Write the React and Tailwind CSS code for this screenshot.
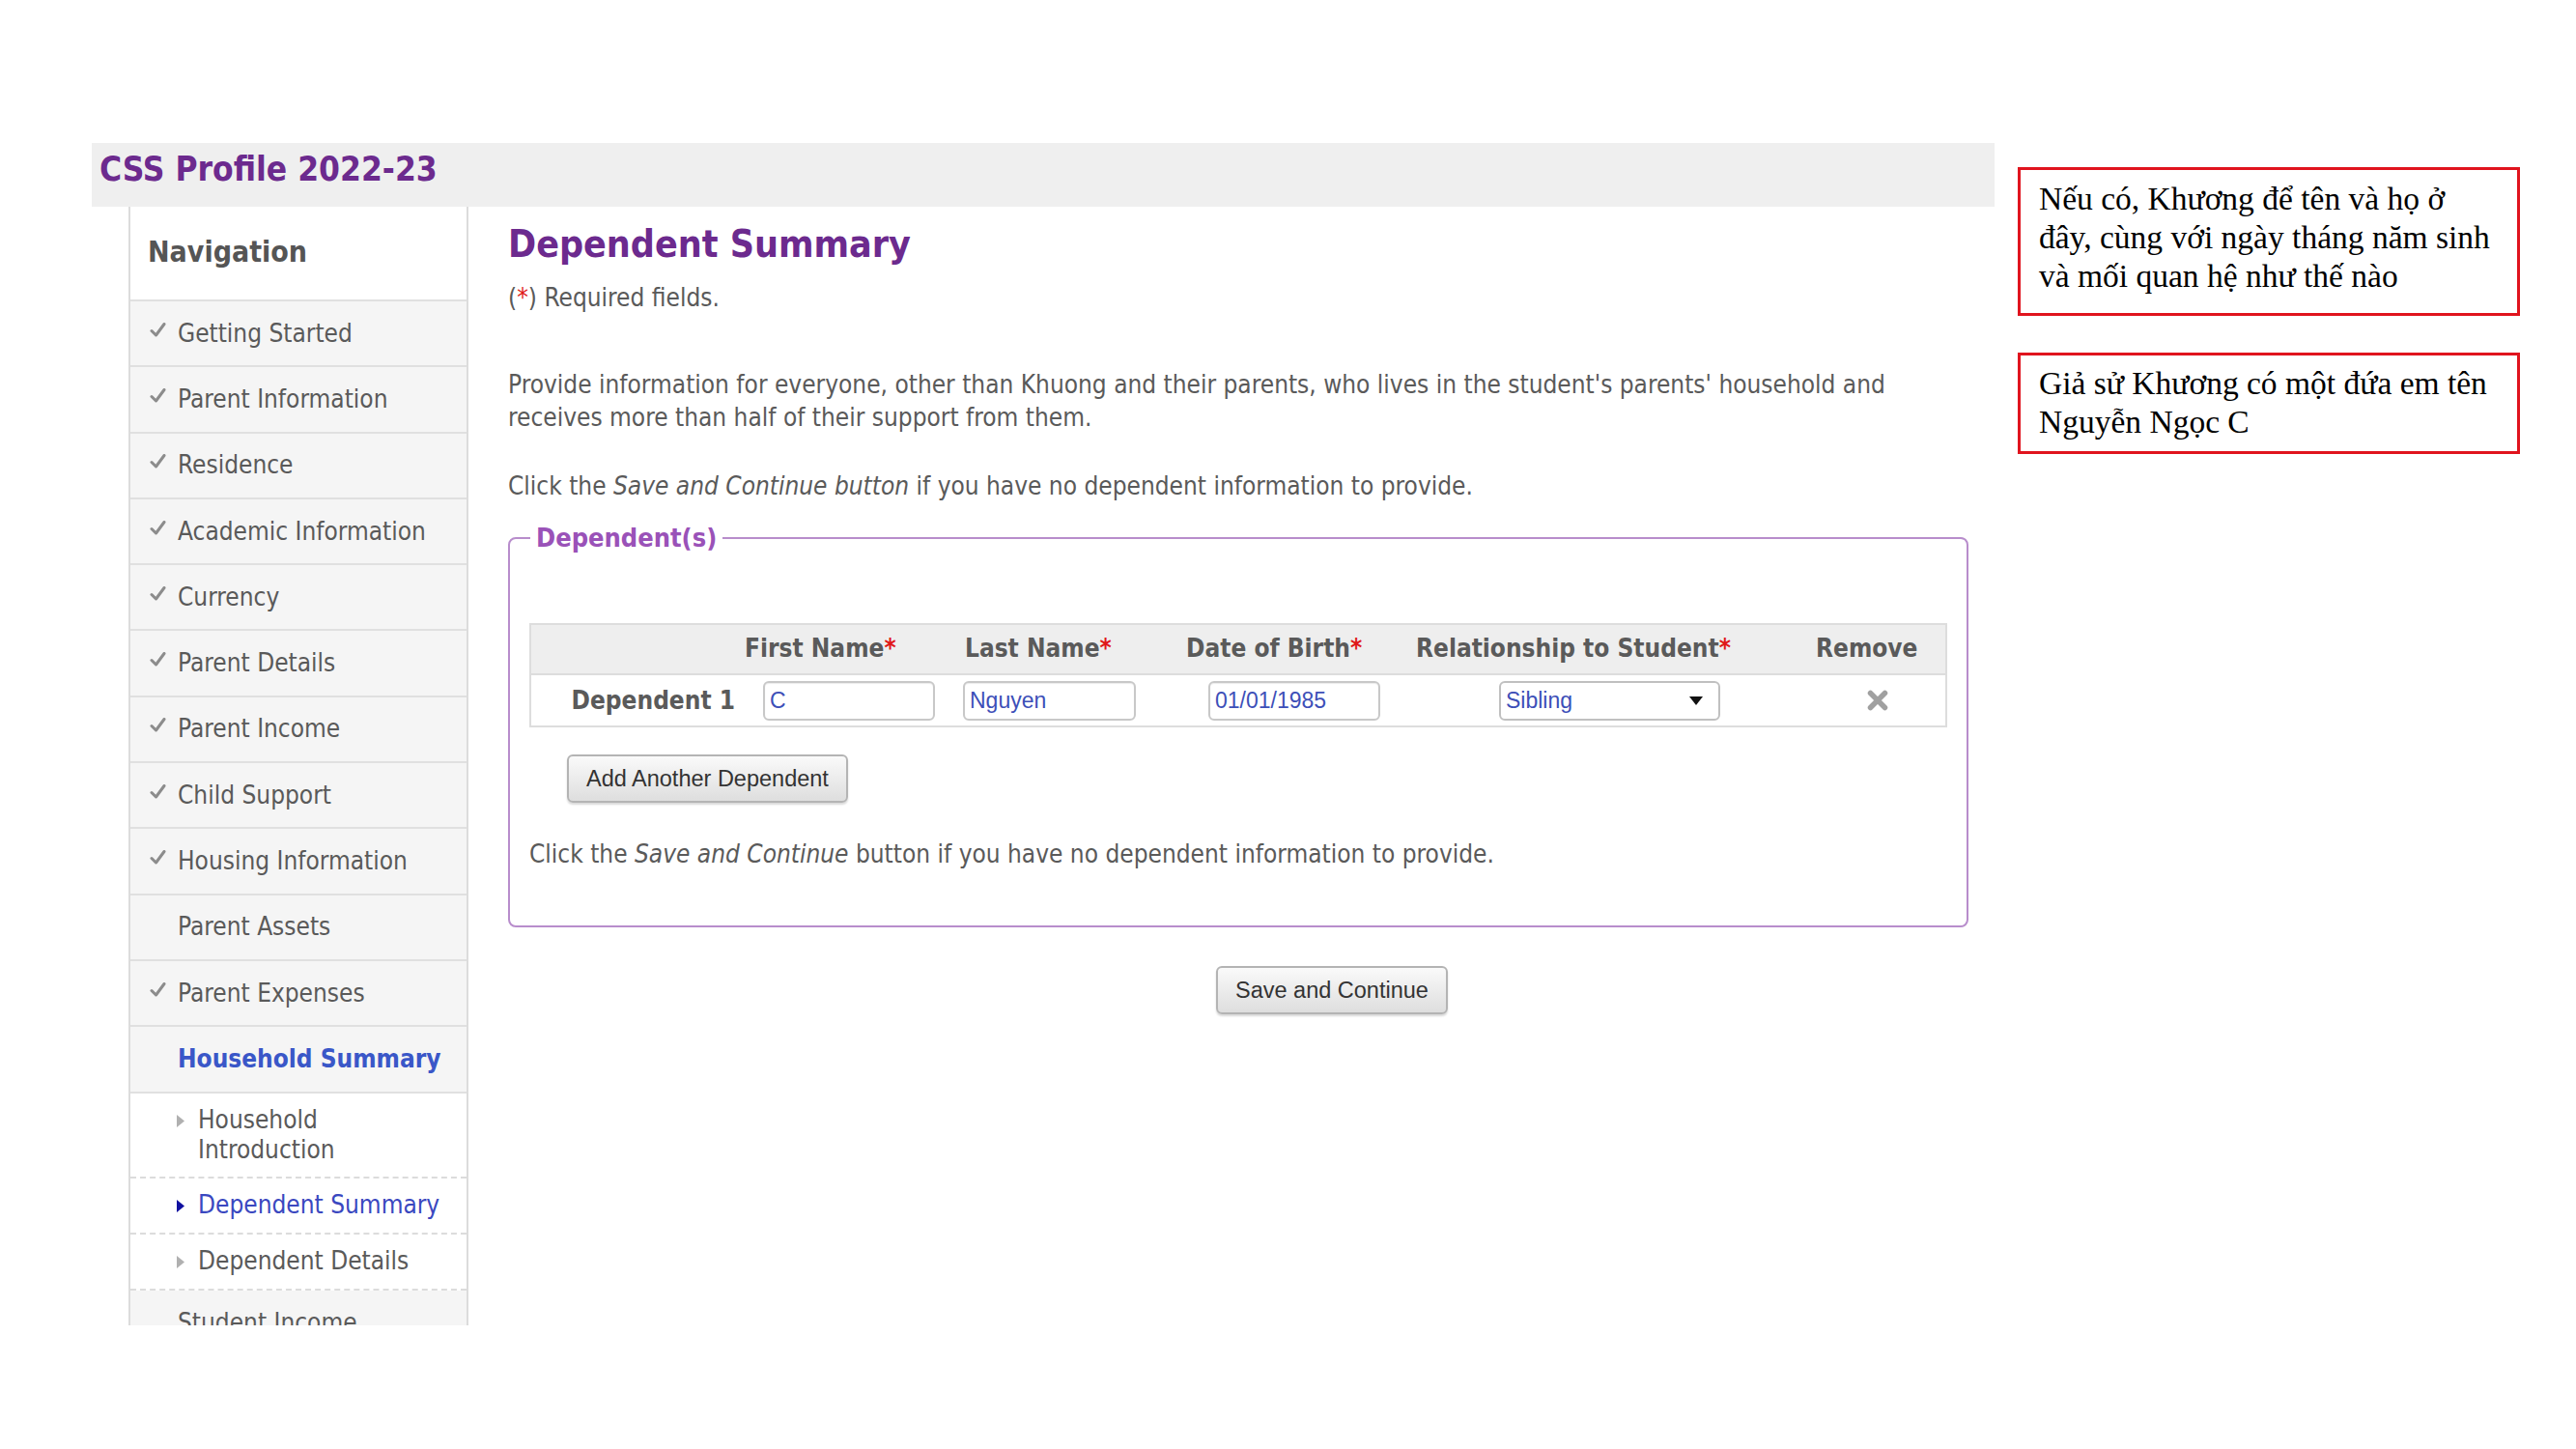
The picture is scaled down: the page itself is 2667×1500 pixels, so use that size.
const navItems = [
  { label: "Getting Started", done: true },
  { label: "Parent Information", done: true },
  { label: "Residence", done: true },
  { label: "Academic Information", done: true },
  { label: "Currency", done: true },
  { label: "Parent Details", done: true },
  { label: "Parent Income", done: true },
  { label: "Child Support", done: true },
  { label: "Housing Information", done: true },
  { label: "Parent Assets", done: false },
  { label: "Parent Expenses", done: true },
];

const subItems = [
  { label: "Household Introduction", active: false, tall: true },
  { label: "Dependent Summary", active: true },
  { label: "Dependent Details", active: false },
];

function Check() {
  return (
    <svg width="17" height="15" viewBox="0 0 17 15" className="-mt-[8px] shrink-0">
      <path d="M2 8.5 L6.5 13 L15 1.5" fill="none" stroke="#8c8c8c" strokeWidth="3" strokeLinecap="round" strokeLinejoin="round" />
    </svg>
  );
}

function Triangle({ active }) {
  return (
    <svg width="9" height="15" viewBox="0 0 9 15" className="mt-[9px] shrink-0">
      <path d="M0 1 L8 7.5 L0 14 Z" fill={active ? "#1010a0" : "#b0b0b0"} />
    </svg>
  );
}

function Sidebar() {
  return (
    <aside className="flex h-[1158px] w-[352px] shrink-0 flex-col overflow-hidden border-x-2 border-[#dcdcdc] text-[26px] text-[#5a5a5a]">
      <div className="flex h-[96px] shrink-0 items-center bg-white pb-[4px] pl-[18px] text-[30px] font-bold text-[#555]">
        Navigation
      </div>
      {navItems.map((item) => (
        <div
          key={item.label}
          className="flex h-[68.3px] shrink-0 items-center border-t-2 border-[#e0e0e0] bg-[#f5f5f5] pl-[20px]"
        >
          <span className="flex w-[29px] justify-start">{item.done && <Check />}</span>
          <span>{item.label}</span>
        </div>
      ))}
      <div className="flex h-[68.3px] shrink-0 items-center border-t-2 border-[#e0e0e0] bg-[#f5f5f5] pl-[49px] font-bold text-[#3a57c8]">
        Household Summary
      </div>
      <div className="shrink-0 border-t-2 border-[#e0e0e0] bg-white">
        {subItems.map((item) => (
          <div
            key={item.label}
            className={`flex gap-[13px] border-b-2 border-dashed border-[#dcdcdc] pl-[48px] leading-[31px] ${
              item.tall ? "h-[88px] pt-[12px]" : "h-[58px] items-start pt-[12px]"
            } ${item.active ? "text-[#3a48c0]" : ""}`}
          >
            <Triangle active={item.active} />
            <span className={item.tall ? "w-[150px]" : ""}>{item.label}</span>
          </div>
        ))}
      </div>
      <div className="flex h-[68px] shrink-0 items-start bg-[#f5f5f5] pl-[49px] pt-[14px]">Student Income</div>
    </aside>
  );
}

function Req() {
  return <span className="text-[#e01818]">*</span>;
}

function TextBox({ value, width }) {
  return (
    <div
      className={`flex h-[41px] items-center rounded-[6px] border-2 border-[#c8c8c8] bg-white pl-[5px] font-['Liberation_Sans',Arial,sans-serif] text-[23px] text-[#3d4fb8] shadow-[inset_0_1px_1px_rgba(0,0,0,0.08)] ${width}`}
    >
      {value}
    </div>
  );
}

function RemoveIcon() {
  return (
    <svg width="22" height="22" viewBox="0 0 22 22" className="ml-[152px]">
      <path d="M3.5 3.5 L18.5 18.5 M18.5 3.5 L3.5 18.5" stroke="#a0a0a0" strokeWidth="5.5" strokeLinecap="round" />
    </svg>
  );
}

function DependentTable() {
  return (
    <div className="border-2 border-[#dddddd]">
      <div className="grid h-[50px] grid-cols-[221px_228px_229px_238px_414px_1fr] items-center bg-[#eeeeee] pb-[3px] font-bold text-[#5a5a5a]">
        <span />
        <span>
          First Name<Req />
        </span>
        <span>
          Last Name<Req />
        </span>
        <span>
          Date of Birth<Req />
        </span>
        <span>
          Relationship to Student<Req />
        </span>
        <span>Remove</span>
      </div>
      <div className="flex h-[54px] items-center border-t-2 border-[#dddddd] bg-white">
        <span className="w-[211px] text-right font-bold text-[#5a5a5a]">Dependent 1</span>
        <div className="ml-[29px]">
          <TextBox value="C" width="w-[178px]" />
        </div>
        <div className="ml-[29px]">
          <TextBox value="Nguyen" width="w-[179px]" />
        </div>
        <div className="ml-[75px]">
          <TextBox value="01/01/1985" width="w-[178px]" />
        </div>
        <div className="ml-[123px] flex h-[41px] w-[229px] items-center justify-between rounded-[6px] border-2 border-[#c0c0c0] bg-white pl-[5px] pr-[16px] font-['Liberation_Sans',Arial,sans-serif] text-[23px] text-[#3d4fb8]">
          <span>Sibling</span>
          <svg width="14" height="9" viewBox="0 0 14 9">
            <path d="M0 0 L14 0 L7 9 Z" fill="#111" />
          </svg>
        </div>
        <RemoveIcon />
      </div>
    </div>
  );
}

function GrayButton({ children, className = "" }) {
  return (
    <button
      type="button"
      className={`h-[50px] rounded-[6px] border-2 border-[#b4b4b4] bg-gradient-to-b from-[#fafafa] to-[#dedede] px-[18px] font-['Liberation_Sans',Arial,sans-serif] text-[23.5px] text-[#333] shadow-[0_2px_2px_rgba(0,0,0,0.15)] ${className}`}
    >
      {children}
    </button>
  );
}

function MainContent() {
  return (
    <main className="flex-1 pl-[41px] pr-[27px] text-[26px] leading-[34px] text-[#5a5a5a]">
      <h1 className="mt-[16px] text-[39px] font-bold leading-[46px] text-[#6c2a8e]">Dependent Summary</h1>
      <p className="mt-[15px]">
        (<Req />) Required fields.
      </p>
      <p className="mt-[56px] w-[1480px]">
        Provide information for everyone, other than Khuong and their parents, who lives in the student&apos;s parents&apos;
        household and receives more than half of their support from them.
      </p>
      <p className="mt-[37px]">
        Click the <i>Save and Continue button</i> if you have no dependent information to provide.
      </p>
      <fieldset className="mt-[21px] w-[1512px] rounded-[8px] border-2 border-[#b88dcc] px-[20px] pb-[57px] pt-[72px]">
        <legend className="ml-[1px] px-[6px] text-[27px] font-bold leading-[32px] text-[#9a52b8]">Dependent(s)</legend>
        <DependentTable />
        <GrayButton className="ml-[39px] mt-[28px]">Add Another Dependent</GrayButton>
        <p className="mt-[36px]">
          Click the <i>Save and Continue</i> button if you have no dependent information to provide.
        </p>
      </fieldset>
      <GrayButton className="ml-[733px] mt-[40px]">Save and Continue</GrayButton>
    </main>
  );
}

export default function App() {
  return (
    <div className="flex min-h-[1500px] w-[2667px] bg-white font-['DejaVu_Sans_Condensed','DejaVu_Sans',sans-serif] [font-stretch:condensed]">
      <div className="ml-[95px] w-[1970px] shrink-0 pt-[148px]">
        <header className="flex h-[66px] items-center bg-[#efefef] pb-[12px] pl-[8px] text-[35px] font-bold text-[#6c2a8e]">
          CSS Profile 2022-23
        </header>
        <div className="flex pl-[38px]">
          <Sidebar />
          <MainContent />
        </div>
      </div>
      <div className="ml-[24px] flex w-[520px] flex-col gap-[38px] pt-[173px] font-['Liberation_Serif','Times_New_Roman',serif] text-[33.5px] leading-[40px] text-black [font-stretch:normal]">
        <div className="border-[3px] border-[#e0141e] px-[19px] pb-[18px] pt-[10px]">
          Nếu có, Khương để tên và họ ở
          <br />
          đây, cùng với ngày tháng năm sinh
          <br />
          và mối quan hệ như thế nào
        </div>
        <div className="border-[3px] border-[#e0141e] px-[19px] pb-[10px] pt-[9px]">
          Giả sử Khương có một đứa em tên
          <br />
          Nguyễn Ngọc C
        </div>
      </div>
    </div>
  );
}
